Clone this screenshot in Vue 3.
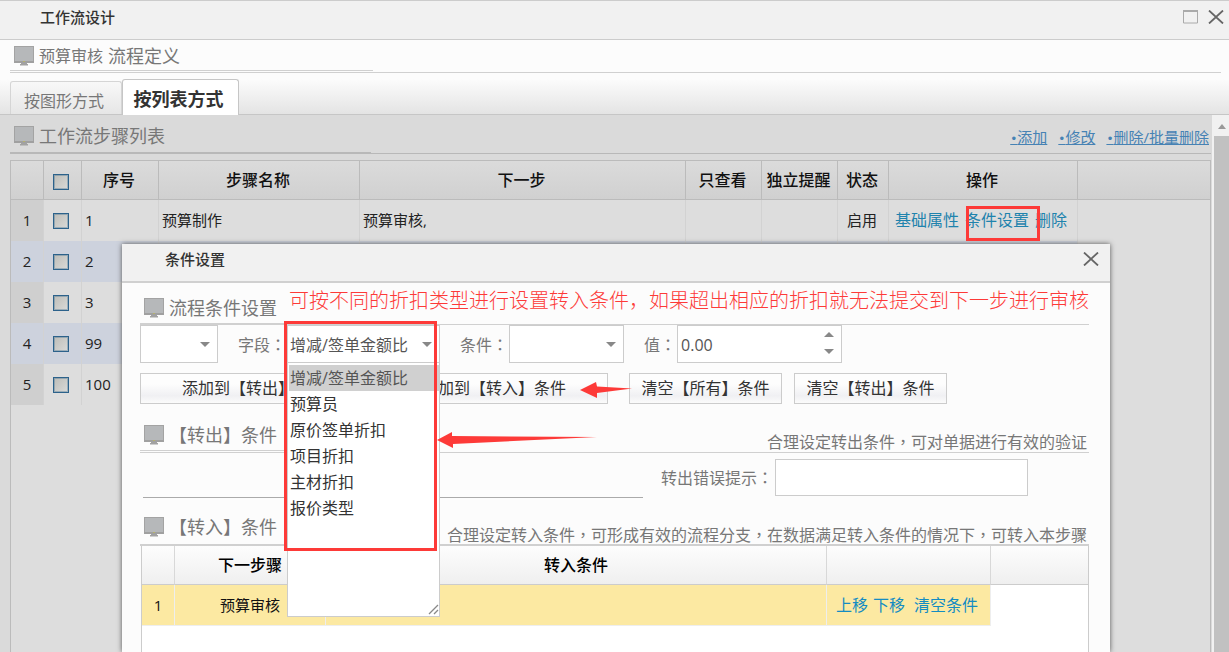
<script setup>
import { ref } from 'vue'

const steps = [
  { no: '1', name: '预算制作', next: '预算审核,', state: '启用' },
  { no: '2', name: '', next: '', state: '' },
  { no: '3', name: '', next: '', state: '' },
  { no: '99', name: '', next: '', state: '' },
  { no: '100', name: '', next: '', state: '' },
]
const fields = ['增减/签单金额比', '预算员', '原价签单折扣', '项目折扣', '主材折扣', '报价类型']
const field = ref(fields[0])
const amount = ref('0.00')
</script>

<template>
  <div class="window">
    <svg class="defs" aria-hidden="true">
      <defs>
        <symbol id="monitor" viewBox="0 0 20 20">
          <rect x="0" y="0" width="20" height="17" fill="#a3a3a3" />
          <rect x="1" y="1" width="18" height="14" fill="#b6b8ba" />
          <rect x="0" y="15" width="20" height="2" fill="#a0a0a0" />
          <rect x="9" y="15" width="2" height="1" fill="#b5b06e" />
          <path d="M7 17h6v1h1v1.500H6V18h1z" fill="#a2a2a2" />
        </symbol>
        <symbol id="cross" viewBox="0 0 16 14">
          <path d="M1 .5 15 13.500M15 .5 1 13.500" stroke="#666" stroke-width="1.800" fill="none" />
        </symbol>
      </defs>
    </svg>

    <header class="titlebar">
      <h1>工作流设计</h1>
      <button class="icon-btn" aria-label="最大化">
        <svg width="15" height="14" viewBox="0 0 15 14"><path d="M.5 1v12h14V1" fill="none" stroke="#aaa" /><path d="M0 1h15" stroke="#aaa" stroke-width="2" /></svg>
      </button>
      <button class="icon-btn" aria-label="关闭"><svg width="16" height="14"><use href="#cross" /></svg></button>
    </header>

    <div class="section top-section">
      <h2><svg width="20" height="20"><use href="#monitor" /></svg><small>预算审核</small> 流程定义</h2>
    </div>

    <nav class="tabs">
      <button class="tab">按图形方式</button>
      <button class="tab active">按列表方式</button>
    </nav>

    <div class="viewport">
      <main class="content">
        <div class="section list-section">
          <h2><svg width="20" height="20"><use href="#monitor" /></svg>工作流步骤列表</h2>
          <div class="tools">
            <a href="#"><b>•</b>添加</a><a href="#"><b>•</b>修改</a><a href="#"><b>•</b>删除/批量删除</a>
          </div>
        </div>
        <div class="grid-panel">
          <table class="steps">
            <colgroup>
              <col class="w33"><col class="w38"><col class="w77"><col class="w201"><col class="w326"><col class="w76"><col class="w76"><col class="w51"><col class="w189"><col>
            </colgroup>
            <thead>
              <tr>
                <th></th>
                <th class="check"><input type="checkbox" aria-label="全选"></th>
                <th>序号</th><th>步骤名称</th><th>下一步</th><th>只查看</th><th>独立提醒</th><th>状态</th><th>操作</th><th></th>
              </tr>
            </thead>
            <tbody>
              <tr v-for="(s, i) in steps" :key="s.no">
                <td class="num">{{ i + 1 }}</td>
                <td class="check"><input type="checkbox" :aria-label="'选择 ' + s.no"></td>
                <td>{{ s.no }}</td>
                <td>{{ s.name }}</td>
                <td>{{ s.next }}</td>
                <td></td>
                <td></td>
                <td class="state">{{ s.state }}</td>
                <td class="ops"><template v-if="i === 0"><a href="#">基础属性</a><a href="#">条件设置</a><a href="#">删除</a></template></td>
                <td class="rest"></td>
              </tr>
            </tbody>
          </table>
        </div>
      </main>
      <div class="scrollbar"><span class="up"></span><span class="thumb"></span></div>
    </div>

    <section class="dialog" role="dialog" aria-labelledby="dlg-title">
      <header class="dialog-head">
        <h2 id="dlg-title">条件设置</h2>
        <button class="icon-btn" aria-label="关闭"><svg width="16" height="14"><use href="#cross" /></svg></button>
      </header>
      <div class="dialog-body">
        <div class="section cond">
          <h3><svg width="20" height="20"><use href="#monitor" /></svg>流程条件设置</h3>
          <p class="note">可按不同的折扣类型进行设置转入条件，如果超出相应的折扣就无法提交到下一步进行审核</p>
        </div>
        <div class="fields">
          <span class="combo logic"><select aria-label="逻辑"><option></option></select></span>
          <label for="field">字段<i>：</i></label>
          <span class="combo field">
            <select id="field" v-model="field"><option v-for="f in fields" :key="f">{{ f }}</option></select>
            <ul class="menu" role="listbox">
              <li v-for="f in fields" :key="f" role="option" :class="{ selected: f === field }">{{ f }}</li>
              <svg class="grip" width="11" height="11" viewBox="0 0 11 11"><path d="M1 10 10 1M6 10l4-4" stroke="#888" stroke-width="1.300" fill="none" /></svg>
            </ul>
          </span>
          <label for="op">条件<i>：</i></label>
          <span class="combo op"><select id="op"><option></option></select></span>
          <label for="amount">值<i>：</i></label>
          <span class="spinner"><input id="amount" v-model="amount" type="text"><span class="arrow-up"></span><span class="arrow-down"></span></span>
        </div>
        <div class="buttons">
          <button class="wide">添加到【转出】条件</button>
          <button class="wide">添加到【转入】条件</button>
          <button class="apart">清空【所有】条件</button>
          <button>清空【转出】条件</button>
        </div>
        <div class="section out">
          <h3><svg width="20" height="20"><use href="#monitor" /></svg>【转出】条件</h3>
          <p>合理设定转出条件<i>，</i>可对单据进行有效的验证</p>
        </div>
        <div class="out-row">
          <input class="expr" type="text" aria-label="转出条件">
          <label for="msg">转出错误提示<i>：</i></label>
          <input id="msg" class="msg" type="text">
        </div>
        <div class="section in">
          <h3><svg width="20" height="20"><use href="#monitor" /></svg>【转入】条件</h3>
          <p>合理设定转入条件<i>，</i>可形成有效的流程分支<i>，</i>在数据满足转入条件的情况下<i>，</i>可转入本步骤</p>
        </div>
        <div class="in-panel">
          <table class="inflow">
            <colgroup><col class="w33"><col class="w151"><col class="w501"><col class="w164"><col></colgroup>
            <thead><tr><th></th><th>下一步骤</th><th>转入条件</th><th></th><th></th></tr></thead>
            <tbody>
              <tr>
                <td>1</td><td>预算审核</td><td></td>
                <td class="moves"><a href="#">上移</a><a href="#">下移</a><a href="#">清空条件</a></td>
                <td class="rest"></td>
              </tr>
            </tbody>
          </table>
        </div>
      </div>
    </section>

    <span class="mark mark-link"></span>
    <span class="mark mark-menu"></span>
    <svg class="arrow a1" width="52" height="18" viewBox="0 0 52 18"><path d="M0 9 16 1 17 5.500 52 7.500 17 12v5z" fill="#fd3a38" /></svg>
    <svg class="arrow a2" width="160" height="18" viewBox="0 0 160 18"><path d="M0 9 15 1v4L160 6 16 13v4z" fill="#fd3a38" /></svg>
  </div>
</template>

<style>
body { background: #fcfcfc; }
</style>

<style scoped>
.window, .window * { box-sizing: border-box; }
.window {
  position: relative; display: flex; flex-direction: column; height: 100vh; overflow: hidden;
  font: 16px/24px "Open Sans", "Noto Sans CJK SC", sans-serif; color: #777; background: #fcfcfc;
}
.defs { position: absolute; width: 0; height: 0; }
h1, h2, h3, p, ul { margin: 0; padding: 0; font-weight: 400; }
button, input, select { font: inherit; color: inherit; }
a { text-decoration: none; color: #148cc2; }
svg { display: block; flex: none; }

.titlebar { display: flex; align-items: center; gap: 10px; height: 40px; flex: none; padding: 0 5px 7px 40px; background: #f1f1f1; border-top: 1px solid #ccc; border-bottom: 1px solid #ccc; }
.titlebar h1 { flex: 1; font-size: 15px; font-weight: 500; color: #333; }
.icon-btn { padding: 0; border: 0; background: none; }

.section { display: flex; justify-content: space-between; border-bottom: 1px solid #d0d0d0; }
.section h2, .section h3 { display: flex; align-items: center; gap: 5px; padding-left: 4px; font-size: 18px; }
.section small { font-size: 16px; }
.section p { white-space: nowrap; padding-right: 2px; }
.top-section { flex: none; height: 33px; margin: 0 8px 6px 10px; }
.top-section h2 { width: 363px; height: 31px; padding-top: 1px; border-bottom: 1px solid #d0d0d0; }

.tabs { display: flex; align-items: flex-end; flex: none; height: 36px; padding-left: 10px; background: linear-gradient(#fcfcfc, #e3e3e3); box-shadow: inset 0 -1px #c6c6c6; }
.tab { width: 112px; height: 33px; margin-bottom: 1px; padding: 6px 4px 0 0; border: 1px solid #d5d5d5; border-bottom: 0; border-radius: 3px 3px 0 0; background: linear-gradient(#f8f8f8, #e6e6e6); color: #777; }
.tab.active { width: 117px; height: 36px; margin-bottom: 0; padding-top: 3px; border-color: #c6c6c6; background: #fff; color: #333; font-size: 18px; font-weight: 700; }

.viewport { display: flex; flex: 1; min-height: 0; }
.content { display: flex; flex-direction: column; flex: 1; padding-left: 10px; padding-right: 1px; background: #dadada; }
.list-section { flex: none; height: 39px; margin-bottom: 6px; border-color: #b8b8b8; }
.list-section h2 { width: 361px; height: 39px; padding-top: 5px; border-bottom: 2px solid #b8b8b8; }
.tools { display: flex; gap: 11px; padding: 10px 2px 0 0; font-size: 15px; }
.tools a { color: #4682b4; text-decoration: underline; }
.tools b { font: 12px "DejaVu Sans", sans-serif; }
.grid-panel { flex: 1; border: 1px solid #bbb; border-bottom: 0; background: #ddd; }

table { width: 100%; table-layout: fixed; border-collapse: separate; border-spacing: 0; }
th, td { overflow: hidden; white-space: nowrap; }
.w33 { width: 33px; } .w38 { width: 38px; } .w51 { width: 51px; } .w76 { width: 76px; } .w77 { width: 77px; }
.w151 { width: 151px; } .w164 { width: 164px; } .w189 { width: 189px; } .w201 { width: 201px; } .w326 { width: 326px; } .w501 { width: 501px; }
.steps th { height: 39px; padding: 0 2px 0 0; border-right: 1px solid #bbb; border-bottom: 1px solid #bbb; background: linear-gradient(#dbdbdb, #d0d0d0); color: #111; font-weight: 500; }
.steps th:last-child { border-right: 0; }
.steps td { height: 41px; padding: 0 3px 2px; border-right: 1px solid #d2d2d2; background: #ddd; color: #222; font-size: 15px; }
.steps tr:nth-child(even) td { background: #cdd2dd; }
.steps td.num { padding: 0 0 2px; text-align: center; background: #cfcfcf; }
.steps td.state { padding: 0 2px 2px 0; text-align: center; }
.steps .check { padding-left: 0; padding-right: 4px; }
.steps td.ops { padding-left: 6px; font-size: 16px; }
.steps .ops a { margin-right: 6px; color: #1f83ad; }
.steps tbody tr td.rest { border: 0; background: #ddd; }
input[type="checkbox"] { appearance: none; display: block; width: 16px; height: 16px; margin: 3px auto 0; border: 1px solid #2c628b; outline: 1px solid #2c628b55; outline-offset: -2px; background: linear-gradient(135deg, #bdbdb8, #dadad8); }

.scrollbar { width: 17px; padding: 9px 0 0 2px; background: #f1f1f1; display: flex; flex-direction: column; }
.up { align-self: center; border: 4px solid transparent; border-top: 0; border-bottom: 5px solid #999; }
.thumb { flex: 1; margin-top: 7px; background: #c1c1c1; }

.dialog { position: absolute; top: 244px; left: 122px; right: 119px; bottom: 0; display: flex; flex-direction: column; background: #fcfcfc; box-shadow: 0 0 5px #555; }
.dialog-head { display: flex; align-items: center; justify-content: space-between; height: 39px; flex: none; padding: 0 11px 8px 43px; background: #f1f1f1; border-bottom: 2px solid #d0d0d0; }
.dialog-head h2 { font-size: 15px; font-weight: 500; color: #333; }
.dialog-body { display: flex; flex-direction: column; flex: 1; padding: 0 21px 0 18px; }
.dialog .section h3 { width: 230px; border-bottom: 1px solid #d0d0d0; }
.cond { height: 42px; }
.dialog .cond h3 { width: 145px; padding-top: 10px; }
.section .note { padding-right: 0; padding-top: 4px; font: 20px/26px "Noto Sans CJK SC", sans-serif; font-weight: 300; color: #fd3a38; }

i { font-family: "Noto Sans CJK TC", sans-serif; font-style: normal; }
.fields { display: flex; align-items: center; height: 38px; }
.fields label { padding-left: 20px; padding-right: 1px; }
.combo { position: relative; height: 38px; }
.combo select { appearance: none; width: 100%; height: 38px; margin: 0; padding: 1px 2px 0; border: 1px solid #ccc; border-radius: 0; background: #fff; color: #555; display: block; }
.combo::after { content: ""; position: absolute; right: 8px; top: 17px; border: 5px solid transparent; border-top-color: #888; border-bottom: 0; pointer-events: none; }
.logic { width: 78px; }
.field { width: 153px; }
.op { width: 115px; }
.spinner { position: relative; width: 165px; height: 38px; }
.spinner input { width: 100%; height: 38px; padding: 2px 3px 0; border: 1px solid #ccc; background: #fff; color: #555; display: block; }
.arrow-up, .arrow-down { position: absolute; right: 8px; border: 5px solid transparent; }
.arrow-up { top: 7px; border-top: 0; border-bottom-color: #888; }
.arrow-down { bottom: 9px; border-bottom: 0; border-top-color: #888; }
.menu { position: absolute; z-index: 2; top: 38px; left: 0; width: 153px; height: 254px; padding: 2px 0; list-style: none; background: #fff; border: 1px solid #ccc; border-top: 0; color: #333; }
.menu li { height: 26px; padding-left: 1px; line-height: 26px; margin-left: 1px; }
.menu .selected { background: #d0d0d0; color: #555; }
.grip { position: absolute; right: 0; bottom: 1px; }

.buttons { display: flex; gap: 12px; margin-top: 10px; }
.buttons button { width: 153px; height: 31px; padding: 0 0 2px; border: 1px solid #ccc; background: linear-gradient(#fdfdfd 35%, #f0f0f3 75%, #fbfbfb); color: #333; white-space: nowrap; }
.buttons .wide { width: 228px; }
.buttons .apart { margin-left: 9px; }
.out { height: 44px; margin-top: 5px; }
.dialog .out h3 { height: 42px; padding-top: 11px; }
.out p { padding-top: 20px; }
.out-row { display: flex; align-items: flex-end; height: 45px; padding-left: 3px; }
.expr { width: 500px; height: 38px; border: 0; border-bottom: 1px solid #aaa; background: none; }
.out-row label { padding: 0 2px 8px 18px; }
.msg { width: 253px; height: 37px; margin-bottom: 2px; border: 1px solid #ccc; background: #fff; }
.in { height: 48px; border-bottom: 2px solid #d0d0d0; }
.dialog .in h3 { border: 0; padding-top: 12px; }
.in p { padding-top: 24px; }
.in-panel { flex: 1; margin-left: 1px; border: 1px solid #ccc; border-width: 0 1px; background: #fff; }
.inflow th { height: 39px; padding: 0; border-right: 1px solid #d8d8d8; border-bottom: 1px solid #ccc; background: linear-gradient(#fdfdfd, #efefef); color: #000; font-weight: 500; }
.inflow th:last-child { border-right: 0; }
.inflow td { height: 41px; padding: 0; border-right: 1px solid #eee; border-bottom: 1px solid #eee; background: #fce9a2; color: #111; font-size: 15px; text-align: center; }
.inflow td.moves { padding-left: 9px; font-size: 16px; text-align: left; }
.moves a { margin-right: 5px; }
.moves a:nth-child(2) { margin-right: 9px; }
.inflow td.rest { border: 0; background: #fff; }

.mark { position: absolute; z-index: 3; border: 3px solid #fd3a38; pointer-events: none; }
.mark-link { left: 966px; top: 206px; width: 74px; height: 35px; }
.mark-menu { left: 284px; top: 321px; width: 153px; height: 230px; }
.arrow { position: absolute; z-index: 3; pointer-events: none; }
.a1 { left: 580px; top: 381px; }
.a2 { left: 437px; top: 431px; }
</style>
